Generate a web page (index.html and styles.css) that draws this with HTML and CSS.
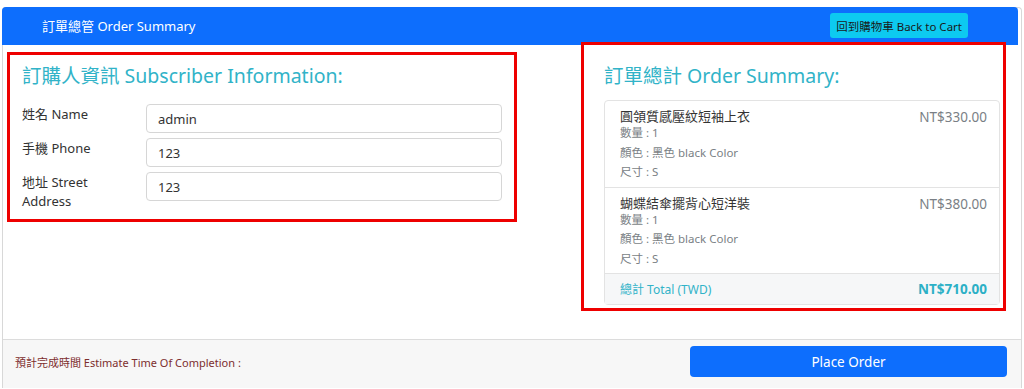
FILE: index.html
```html
<!DOCTYPE html>
<html lang="zh-Hant">
<head>
    <meta charset="UTF-8">
    <meta name="viewport" content="width=device-width, initial-scale=1.0">
    <title>訂單總管 Order Summary</title>
    <link rel="stylesheet" href="styles.css">
</head>
<body>

<div class="card">
    <div class="card-header">
        <span class="header-title">訂單總管 Order Summary</span>
        <button type="button" class="btn-cart">回到購物車 Back to Cart</button>
    </div>

    <div class="card-body">
        <!-- subscriber info -->
        <div class="col-left">
            <h4 class="section-title">訂購人資訊 Subscriber Information:</h4>
            <form class="info-form">
                <div class="form-row">
                    <label for="name">姓名 Name</label>
                    <input type="text" id="name" value="admin">
                </div>
                <div class="form-row">
                    <label for="phone">手機 Phone</label>
                    <input type="text" id="phone" value="123">
                </div>
                <div class="form-row">
                    <label for="address">地址 Street Address</label>
                    <input type="text" id="address" value="123">
                </div>
            </form>
        </div>

        <!-- order summary -->
        <div class="col-right">
            <h4 class="section-title">訂單總計 Order Summary:</h4>
            <ul class="list-group">
                <li class="list-item">
                    <div class="item-info">
                        <h6 class="item-name">圓領質感壓紋短袖上衣</h6>
                        <small>數量 : 1</small>
                        <small>顏色 : 黑色 black Color</small>
                        <small>尺寸 : S</small>
                    </div>
                    <span class="item-price">NT$330.00</span>
                </li>
                <li class="list-item">
                    <div class="item-info">
                        <h6 class="item-name">蝴蝶結傘擺背心短洋裝</h6>
                        <small>數量 : 1</small>
                        <small>顏色 : 黑色 black Color</small>
                        <small>尺寸 : S</small>
                    </div>
                    <span class="item-price">NT$380.00</span>
                </li>
                <li class="list-item total-row">
                    <span>總計 Total (TWD)</span>
                    <strong>NT$710.00</strong>
                </li>
            </ul>
        </div>
    </div>

    <div class="card-footer">
        <span class="estimate">預計完成時間 Estimate Time Of Completion :</span>
        <button type="button" class="btn-place">Place Order</button>
    </div>
</div>

<!-- red highlight boxes drawn over the screenshot -->
<div class="mark mark-left"></div>
<div class="mark mark-right"></div>

</body>
</html>
```

FILE: styles.css
```css
body {
    font-family: "Noto Sans", "Noto Sans CJK TC", sans-serif;
    margin: 0;
    padding: 0;
    background-color: #fff;
    color: #212529;
    position: relative;
}

.card {
    margin: 7px 2px 0 2px;
    border: 1px solid #d8d8d8;
    border-bottom: none;
    border-radius: 4px 4px 0 0;
}

.card-header {
    height: 38px;
    margin: -1px 3px 0 -1px;
    background-color: #0d6efd;
    border-radius: 4px 4px 0 0;
    display: flex;
    align-items: center;
    justify-content: space-between;
    padding: 0 50px 0 40px;
}

.header-title {
    color: #fff;
    font-size: 13px;
    margin-top: -2px;
}

.btn-cart {
    height: 25px;
    padding: 0 6px;
    margin-top: -1px;
    background-color: #0dcaf0;
    color: #1a1a1a;
    border: none;
    border-radius: 3px;
    font-family: inherit;
    font-size: 11.5px;
}

/* two columns */
.card-body {
    height: 294px;
    display: flex;
    justify-content: space-between;
    padding: 0 21px 0 19px;
    box-sizing: border-box;
}

.col-left {
    width: 480px;
}

.col-right {
    width: 396px;
}

.section-title {
    margin: 18px 0 11px 0;
    font-size: 19.5px;
    font-weight: normal;
    line-height: 26px;
    color: #31b3c8;
}

.info-form {
    display: flex;
    flex-direction: column;
    gap: 5px;
    padding-top: 4px;
}

.form-row {
    display: flex;
    align-items: flex-start;
}

.form-row label {
    width: 100px;
    margin-right: 24px;
    font-size: 13px;
    line-height: 19px;
    padding-top: 1px;
    color: #333;
}

.form-row input {
    flex: 1;
    height: 29px;
    box-sizing: border-box;
    padding: 0 11px;
    border: 1px solid #d6d6d6;
    border-radius: 4px;
    font-family: inherit;
    font-size: 13px;
    color: #333;
}

.list-group {
    list-style: none;
    margin: 0;
    padding: 0;
    border: 1px solid #e3e3e3;
    border-radius: 4px;
}

.list-item {
    display: flex;
    justify-content: space-between;
    padding: 6px 12px 5px 15px;
    border-bottom: 1px solid #e3e3e3;
}

.item-info {
    display: flex;
    flex-direction: column;
}

.item-name {
    margin: 0 0 -2px 0;
    font-size: 13px;
    font-weight: normal;
    line-height: 18px;
    color: #333;
}

.item-info small {
    font-size: 11.5px;
    line-height: 19.5px;
    color: #7a7f85;
}

.item-price {
    font-size: 13.5px;
    line-height: 20px;
    color: #7a7f85;
}

.total-row {
    border-bottom: none;
    background-color: #f6f7f8;
    align-items: center;
    height: 30px;
    padding: 0 12px 0 15px;
    font-size: 12px;
    color: #31b3c8;
}

.total-row strong {
    font-size: 13.5px;
    color: #2cb0c6;
}

.card-footer {
    border-top: 1px solid #dcdcdc;
    background-color: #f7f7f7;
    height: 49px;
    box-sizing: border-box;
    display: flex;
    align-items: center;
    justify-content: space-between;
    padding: 0 14px 5px 12px;
}

.estimate {
    font-size: 11px;
    color: #7d2e2e;
}

.btn-place {
    width: 317px;
    height: 31px;
    background-color: #0d6efd;
    color: #fff;
    border: none;
    border-radius: 4px;
    font-family: inherit;
    font-size: 13.5px;
}

/* annotation boxes */
.mark {
    position: absolute;
    border: 3px solid #ee0000;
    box-sizing: border-box;
}

.mark-left {
    left: 7px;
    top: 52px;
    width: 510px;
    height: 170px;
}

.mark-right {
    left: 581px;
    top: 42px;
    width: 425px;
    height: 269px;
}
```
